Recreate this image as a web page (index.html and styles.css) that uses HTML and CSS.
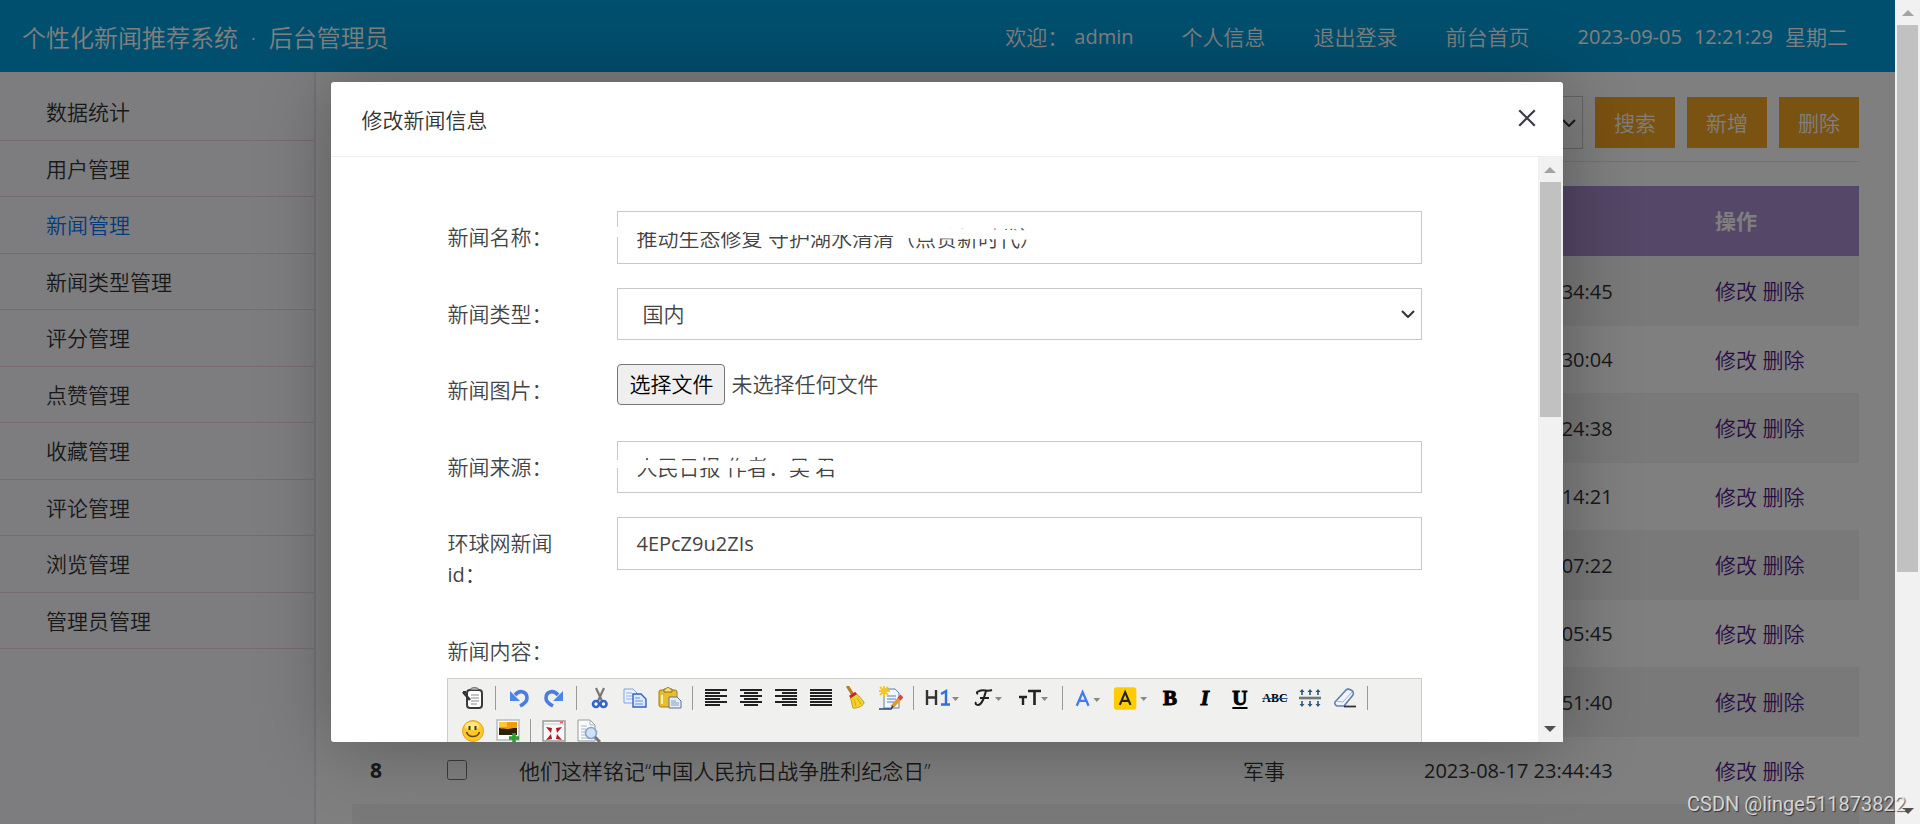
FILE: index.html
```html
<!DOCTYPE html>
<html lang="zh-CN">
<head>
<meta charset="utf-8">
<title>个性化新闻推荐系统 · 后台管理员</title>
<link rel="stylesheet" href="styles.css">
</head>
<body>
<div class="app">
  <header class="topbar">
    <h1 class="brand">个性化新闻推荐系统 &nbsp;·&nbsp; 后台管理员</h1>
    <nav class="topnav">
      <span class="welcome"><span>欢迎：</span><span class="latin">admin</span></span>
      <a href="#">个人信息</a>
      <a href="#">退出登录</a>
      <a href="#">前台首页</a>
      <span class="clock"><span class="latin">2023-09-05</span><span class="latin">12:21:29</span><span>星期二</span></span>
    </nav>
  </header>
  <div class="layout">
    <aside class="sidebar">
      <ul class="menu">
        <li><a href="#">数据统计</a></li>
        <li><a href="#">用户管理</a></li>
        <li><a href="#" class="active">新闻管理</a></li>
        <li><a href="#">新闻类型管理</a></li>
        <li><a href="#">评分管理</a></li>
        <li><a href="#">点赞管理</a></li>
        <li><a href="#">收藏管理</a></li>
        <li><a href="#">评论管理</a></li>
        <li><a href="#">浏览管理</a></li>
        <li><a href="#">管理员管理</a></li>
      </ul>
    </aside>
    <main class="content">
      <form class="search">
        <div class="select-wrap search-type">
          <select aria-label="新闻类型"><option></option></select>
          <svg class="chevron" viewBox="0 0 14 8"><path d="M1 1l6 6 6-6"/></svg>
        </div>
        <button type="button">搜索</button>
        <button type="button">新增</button>
        <button type="button">删除</button>
      </form>
      <table class="news">
        <colgroup><col class="c-id"><col class="c-check"><col><col class="c-type"><col class="c-time"><col class="c-op"></colgroup>
        <thead><tr><th></th><th></th><th></th><th></th><th></th><th>操作</th></tr></thead>
        <tbody>
          <tr><th>1</th><td><input type="checkbox" aria-label="选择 1"></td><td></td><td></td><td class="time">2023-08-18 00:34:45</td><td><a href="#">修改</a> <a href="#">删除</a></td></tr>
          <tr><th>2</th><td><input type="checkbox" aria-label="选择 2"></td><td></td><td></td><td class="time">2023-08-18 00:30:04</td><td><a href="#">修改</a> <a href="#">删除</a></td></tr>
          <tr><th>3</th><td><input type="checkbox" aria-label="选择 3"></td><td></td><td></td><td class="time">2023-08-18 00:24:38</td><td><a href="#">修改</a> <a href="#">删除</a></td></tr>
          <tr><th>4</th><td><input type="checkbox" aria-label="选择 4"></td><td></td><td></td><td class="time">2023-08-18 00:14:21</td><td><a href="#">修改</a> <a href="#">删除</a></td></tr>
          <tr><th>5</th><td><input type="checkbox" aria-label="选择 5"></td><td></td><td></td><td class="time">2023-08-18 00:07:22</td><td><a href="#">修改</a> <a href="#">删除</a></td></tr>
          <tr><th>6</th><td><input type="checkbox" aria-label="选择 6"></td><td></td><td></td><td class="time">2023-08-18 00:05:45</td><td><a href="#">修改</a> <a href="#">删除</a></td></tr>
          <tr><th>7</th><td><input type="checkbox" aria-label="选择 7"></td><td></td><td></td><td class="time">2023-08-17 23:51:40</td><td><a href="#">修改</a> <a href="#">删除</a></td></tr>
          <tr><th>8</th><td><input type="checkbox" aria-label="选择 8"></td><td>他们这样铭记“中国人民抗日战争胜利纪念日”</td><td>军事</td><td class="time">2023-08-17 23:44:43</td><td><a href="#">修改</a> <a href="#">删除</a></td></tr>
          <tr><th></th><td></td><td></td><td></td><td></td><td></td></tr>
        </tbody>
      </table>
    </main>
  </div>

  <div class="shade">
    <section class="dialog" role="dialog" aria-labelledby="dlg-title">
      <div class="dialog-head">
        <h2 id="dlg-title">修改新闻信息</h2>
        <button type="button" class="close" aria-label="关闭"><svg viewBox="0 0 18 18"><path d="M2 2l14 14M16 2L2 16"/></svg></button>
      </div>
      <div class="dialog-body">
        <form class="form">
          <div class="row">
            <label for="name">新闻名称：</label>
            <div class="field">
              <input id="name" type="text" value="推动生态修复 守护湖水清清（点赞新时代）">
              <svg class="mask" viewBox="0 0 440 53"><path d="M0 16L25 12L330 17L430 20V29L285 27L275 24H150V21H18V26H0z"/></svg>
            </div>
          </div>
          <div class="row">
            <label for="type">新闻类型：</label>
            <div class="field select-wrap">
              <select id="type"><option>国内</option></select>
              <svg class="chevron" viewBox="0 0 14 8"><path d="M1 1l6 6 6-6"/></svg>
            </div>
          </div>
          <div class="row">
            <label for="pic">新闻图片：</label>
            <label class="file"><input id="pic" type="file"><span class="file-btn">选择文件</span><span>未选择任何文件</span></label>
          </div>
          <div class="row">
            <label for="source">新闻来源：</label>
            <div class="field">
              <input id="source" type="text" value="人民日报 作者：吴 君">
              <svg class="mask" viewBox="0 0 440 53"><path d="M0 19L225 20V27H0z"/></svg>
            </div>
          </div>
          <div class="row tall">
            <label for="hid">环球网新闻<span class="latin">id</span>：</label>
            <div class="field"><input id="hid" type="text" value="4EPcZ9u2ZIs"></div>
          </div>
          <div class="editor-row">
            <span class="editor-label">新闻内容：</span>
            <div class="editor">
              <div class="tools">
                <button type="button" aria-label="源代码"><svg viewBox="0 0 24 24"><rect x="6" y="4" width="15" height="18" rx="3" fill="#fff" stroke="#3a3a3a" stroke-width="2"/><path d="M9 4c0-3 9-3 9 0z" fill="#ddd" stroke="#444"/><path d="M10 9h8M10 12h8M10 15h8M10 18h6" stroke="#888"/><path d="M2 6l7 8" stroke="#333" stroke-width="2.5"/><path d="M2 6l3 0" stroke="#333" stroke-width="2"/></svg></button>
                <i></i>
                <button type="button" aria-label="后退"><svg viewBox="0 0 24 24"><path d="M8 9c5-6 12-3 12 3 0 4-3 6-7 8" fill="none" stroke="#4a7de0" stroke-width="3.6"/><path d="M3 5v10h10z" fill="#4a86e8"/></svg></button>
                <button type="button" aria-label="前进"><svg viewBox="0 0 24 24"><path d="M16 9C11 3 4 6 4 12c0 4 3 6 7 8" fill="none" stroke="#4a7de0" stroke-width="3.6"/><path d="M21 5v10H11z" fill="#4a86e8"/></svg></button>
                <i></i>
                <button type="button" aria-label="剪切"><svg viewBox="0 0 24 24"><path d="M8 2l6 13M16 2l-6 13" stroke="#777" stroke-width="2.2"/><circle cx="8" cy="18" r="3" fill="#fff" stroke="#2f66c8" stroke-width="2.6"/><circle cx="15.500" cy="18" r="3" fill="#fff" stroke="#2f66c8" stroke-width="2.6"/></svg></button>
                <button type="button" aria-label="复制"><svg viewBox="0 0 24 24"><path d="M1 3h9l4 4v10H1z" fill="#eaf2ff" stroke="#7fa3e0"/><path d="M3 7h6M3 10h8M3 13h8" stroke="#8fb0e6"/><path d="M10 8h8l5 5v8H10z" fill="#dce8ff" stroke="#2f62c4" stroke-width="1.400"/><path d="M12 12h5M12 15h8M12 18h8" stroke="#6a93dc"/></svg></button>
                <button type="button" aria-label="粘贴"><svg viewBox="0 0 24 24"><rect x="1" y="4" width="18" height="17" rx="2" fill="#e9bd32" stroke="#a77b13"/><path d="M6 6V3h2c0-2 4-2 4 0h2v3z" fill="#fbe27b" stroke="#8c6a14"/><path d="M4 9v9" stroke="#fff3a8" stroke-width="2"/><path d="M11 11h8l4 4v7H11z" fill="#e4ecf7" stroke="#5d7594"/><path d="M13 15h5M13 17h8M13 19h8" stroke="#8b9fb8"/></svg></button>
                <i></i>
                <button type="button" aria-label="左对齐"><svg class="lines" viewBox="0 0 24 24"><path d="M1 4h22M1 7h15M1 10h22M1 13h15M1 16h22M1 19h15"/></svg></button>
                <button type="button" aria-label="居中"><svg class="lines" viewBox="0 0 24 24"><path d="M1 4h22M5 7h14M1 10h22M5 13h14M1 16h22M5 19h14"/></svg></button>
                <button type="button" aria-label="右对齐"><svg class="lines" viewBox="0 0 24 24"><path d="M1 4h22M8 7h15M1 10h22M8 13h15M1 16h22M8 19h15"/></svg></button>
                <button type="button" aria-label="两端对齐"><svg class="lines" viewBox="0 0 24 24"><path d="M1 4h22M1 7h22M1 10h22M1 13h22M1 16h22M1 19h22"/></svg></button>
                <button type="button" aria-label="清理HTML代码"><svg viewBox="0 0 24 24"><path d="M4 1l5 8" stroke="#bd7b1c" stroke-width="3.200" stroke-linecap="round"/><path d="M6 10l6-3 8 9c1 3-7 7-11 6z" fill="#f3d22e" stroke="#c99a13"/><path d="M6 11l6-4" stroke="#c8282a" stroke-width="3"/><path d="M10 13l2 7M13 12l4 6" stroke="#d0a416"/></svg></button>
                <button type="button" aria-label="一键排版"><svg viewBox="0 0 24 24"><path d="M5 3h11l4 4v15H5z" fill="#f3f7ff" stroke="#5e7fb5"/><path d="M8 10h9M8 13h9M8 16h7" stroke="#8aa8d8" stroke-width="1.300"/><path d="M5 0v11M0 5h11M1 1l8 8M9 1L1 9" stroke="#f5c624" stroke-width="1.800"/><path d="M13 21l9-10" stroke="#e09a2a" stroke-width="4"/><path d="M20 13l3-3" stroke="#d8453a" stroke-width="4"/><path d="M0 23h8l4 0 2-3" stroke="#26476e" stroke-width="1.600" fill="none"/></svg></button>
                <i></i>
                <button type="button" class="wide" aria-label="段落"><svg viewBox="0 0 46 24"><path d="M8 4v15M17 4v15M8 11.500h9" stroke="#333" stroke-width="2.400"/><path d="M22 8l5-3v14M22 18.500h9" fill="none" stroke="#2f6fe4" stroke-width="2.400"/><path class="tri" d="M33 11h7l-3.500 4z"/></svg></button>
                <button type="button" class="wide" aria-label="字体"><svg viewBox="0 0 46 24"><path d="M14 5c5-2 8 1 13-1M21 5c-2 7-4 14-8 14-2 0-3-1-2-3M15 12h9M13 8c-2-1-1-3 2-3" fill="none" stroke="#222" stroke-width="2"/><path class="tri" d="M30 11h7l-3.500 4z"/></svg></button>
                <button type="button" class="wide" aria-label="文字大小"><svg viewBox="0 0 46 24"><path d="M8 11h8M12 11v8" stroke="#222" stroke-width="2.400"/><path d="M17 5h13M23.500 5v14" stroke="#222" stroke-width="2.600"/><path class="tri" d="M30 11h7l-3.500 4z"/></svg></button>
                <i></i>
                <button type="button" class="mid" aria-label="文字颜色"><svg viewBox="0 0 43 24"><path d="M9 20l6-14 6 14M11 15h8" fill="none" stroke="#3f7cf0" stroke-width="2.400"/><path class="tri" d="M26 12h7l-3.500 4z"/></svg></button>
                <button type="button" class="mid" aria-label="文字背景"><svg viewBox="0 0 43 24"><rect x="4" y="1" width="23" height="23" rx="3" fill="#fc0"/><path d="M10 19l5.500-13L21 19M12 15h7" fill="none" stroke="#222" stroke-width="2.200"/><path class="tri" d="M31 11h7l-3.500 4z"/></svg></button>
                <button type="button" aria-label="粗体"><b class="glyph">B</b></button>
                <button type="button" aria-label="斜体"><b class="glyph slant">I</b></button>
                <button type="button" aria-label="下划线"><b class="glyph under">U</b></button>
                <button type="button" aria-label="删除线"><b class="glyph strike">ABC</b></button>
                <button type="button" aria-label="行距"><svg viewBox="0 0 24 24"><path d="M1 12h22" stroke="#777" stroke-width="2.600"/><path d="M4 9V4M12 9V4M20 9V4M4 15v5M12 15v5M20 15v5" stroke="#2e5878" stroke-width="1.600"/><path d="M1.500 6L4 3l2.500 3zM9.500 6L12 3l2.500 3zM17.500 6L20 3l2.500 3zM1.500 18L4 21l2.500-3zM9.500 18l2.500 3 2.500-3zM17.500 18l2.500 3 2.500-3z" fill="#2e5878"/></svg></button>
                <button type="button" aria-label="删除格式"><svg viewBox="0 0 24 24"><path d="M2 16L13 4c1-1 3-1 5 0s3 3 2 5L11 20H5c-2 0-4-2-3-4z" fill="#eef4fc" stroke="#5f7fae" stroke-width="1.600"/><path d="M3 15l7 1 9-10" fill="none" stroke="#9bb5d8"/><path d="M11 20.500h12" stroke="#333" stroke-width="1.800"/></svg></button>
                <i></i>
              </div>
              <div class="tools">
                <button type="button" aria-label="插入表情"><svg viewBox="0 0 24 24"><circle cx="12" cy="12" r="10.500" fill="#ffc928" stroke="#e8a317"/><ellipse cx="11" cy="7" rx="7" ry="4" fill="#ffe88a"/><path d="M8.500 7v4M14.500 7v4" stroke="#4a3208" stroke-width="2"/><path d="M5.500 13c2 6 11 6 13 0" fill="none" stroke="#6b4708" stroke-width="1.600"/></svg></button>
                <button type="button" aria-label="图片"><svg viewBox="0 0 24 24"><path d="M1 1h22v20H1z" fill="#fff" stroke="#bbb" stroke-width="1.500"/><path d="M3 3h18v13H3z" fill="#2c2208"/><path d="M3 3h18v6c-6 0-8 2-18 0z" fill="#f39a14"/><path d="M3 3h8v5H3z" fill="#ffc933"/><path d="M18 14v10M13 19h10" stroke="#2f9e2f" stroke-width="3.500"/></svg></button>
                <i></i>
                <button type="button" aria-label="全屏显示"><svg viewBox="0 0 24 24"><path d="M1 2h22v20H1z" fill="#f7f7f7" stroke="#999" stroke-width="1.500"/><path d="M2 5h20" stroke="#ccc"/><path d="M18 3.500h3" stroke="#d55" stroke-width="1.500"/><path d="M4 8l6 1-1 5zM20 8l-6 1 1 5zM4 21l6-1-1-5zM20 21l-6-1 1-5z" fill="#b01c24"/></svg></button>
                <button type="button" aria-label="预览"><svg viewBox="0 0 24 24"><path d="M1 1h12l5 5v16H1z" fill="#fafafa" stroke="#999"/><path d="M13 1v5h5M4 7h6M4 10h5M4 13h5M4 16h5M4 19h8" fill="none" stroke="#aab6c4"/><circle cx="14" cy="14" r="5.500" fill="#cfe0f8" stroke="#86a4d4" stroke-width="1.600"/><path d="M18 18l5 5" stroke="#777" stroke-width="3"/></svg></button>
              </div>
            </div>
          </div>
        </form>
        <div class="scroll inner" aria-hidden="true"><span class="up"></span><span class="thumb"></span><span class="down"></span></div>
      </div>
    </section>
  </div>
</div>
<div class="scroll outer" aria-hidden="true"><span class="up"></span><span class="thumb"></span><span class="down"></span></div>
<div class="watermark">CSDN @linge511873822</div>
</body>
</html>
```
FILE: styles.css
```css
* { box-sizing: border-box; }
body {
  margin: 0;
  height: 100vh;
  overflow: hidden;
  display: flex;
  font-family: "Open Sans", "Noto Sans CJK SC", sans-serif;
  font-size: 21px;
  font-weight: 350;
  color: #333;
}
button, input, select { font: inherit; color: inherit; }
h1, h2, ul { margin: 0; padding: 0; font-weight: inherit; }
a { text-decoration: none; color: inherit; }
.latin { font-size: 20px; font-weight: 400; }

.app { position: relative; flex: 1; min-width: 0; overflow: hidden; display: flex; flex-direction: column; background: #fff; }
.topbar { flex: none; height: 72px; padding: 0 47px 0 22px; display: flex; align-items: center; justify-content: space-between; background: #009fdc; color: #fff; }
.brand { font-size: 24px; }
.topnav { display: flex; align-items: center; gap: 48px; }
.welcome { display: flex; align-items: center; gap: 6px; }
.clock { display: flex; align-items: center; gap: 12px; }

.layout { flex: 1; min-height: 0; display: flex; }
.sidebar { flex: none; width: 316px; padding-top: 12px; background: #fafafe; border-right: 2px solid #e6e6e6; }
.menu { list-style: none; display: grid; grid-template-rows: repeat(5, 57px 56px); }
.menu li { border-bottom: 1px solid #f0d8d8; }
.menu a { display: flex; align-items: center; height: 100%; padding: 0 0 2px 46px; color: #333; }
.menu a.active { color: #0078ff; }

.content { flex: 1; min-width: 0; padding: 24px 36px 0; }
.search { display: flex; align-items: center; justify-content: flex-end; gap: 12px; padding-bottom: 12px; border-bottom: 1px solid #e6e6e6; margin-bottom: 24px; }
.search button { width: 80px; height: 51px; padding: 0 0 2px; border: 0; background: #f5a422; color: #fff; }
.search-type { width: 240px; height: 53px; }

.news { width: 100%; table-layout: fixed; border-collapse: collapse; }
.c-id { width: 77px; }
.c-check { width: 72px; }
.c-type { width: 181px; }
.c-time { width: 291px; }
.c-op { width: 162px; }
.news th, .news td { padding: 0 0 2px 18px; text-align: left; white-space: nowrap; height: 67px; }
.news th { font-weight: 700; }
.news thead th { height: 70px; background: #a88fcf; color: #fff; }
.news tbody tr:nth-child(odd) > * { height: 70px; background: #f2f2f2; }
.news td.time { font-size: 20px; font-weight: 400; padding-bottom: 0; }
.news a { color: #551a8b; }
.news input { display: block; width: 20px; height: 20px; margin: 0; }

.select-wrap { position: relative; }
.select-wrap select { width: 100%; height: 100%; padding: 0 24px; border: 1px solid #c8c8cc; border-radius: 0; background: #fff; appearance: none; }
.chevron { position: absolute; right: 7px; top: 50%; width: 14px; height: 8px; margin-top: -4px; fill: none; stroke: #333; stroke-width: 2; pointer-events: none; }

.shade { position: absolute; inset: 0; padding-right: 1px; display: flex; align-items: center; justify-content: center; background: rgba(0, 0, 0, .5); }
.dialog { width: 65%; height: 80vh; display: flex; flex-direction: column; background: #fff; border-radius: 3px; box-shadow: 2px 2px 75px rgba(0, 0, 0, .3); }
.dialog-head { flex: none; height: 75px; padding: 0 26px 0 30px; display: flex; align-items: center; justify-content: space-between; border-bottom: 1px solid #eee; }
.dialog-head h2 { font-size: 21px; }
.close { padding: 0 0 2px; border: 0; background: none; display: flex; }
.close svg { width: 20px; height: 20px; fill: none; stroke: #3c3c46; stroke-width: 2; }
.dialog-body { flex: 1; min-height: 0; overflow: hidden; display: flex; }

.form { flex: 1; min-width: 0; padding: 54px 116px 0; color: #444; }
.row { display: flex; height: 53px; margin-bottom: 24px; }
.row:nth-child(even) { height: 52px; }
.row.tall { height: auto; }
.row > label:first-child { flex: none; width: 120px; margin-right: 50px; padding: 11px 0; line-height: 31px; }
.field { position: relative; flex: 1; }
.field input { width: 100%; height: 53px; padding: 0 18px 2px; border: 1px solid #c8c8cc; border-radius: 0; background: #fff; }
.row:nth-child(even) input { height: 52px; }
.field select { padding: 0 24px; }
#hid { font-size: 20px; font-weight: 400; padding-bottom: 0; }
.mask { position: absolute; left: 0; top: 0; width: 440px; height: 53px; fill: #fff; pointer-events: none; }
.file { display: flex; align-items: center; gap: 6px; height: 41px; line-height: 39px; }
.file input { position: absolute; width: 1px; height: 1px; opacity: 0; }
.file-btn { height: 41px; padding: 0 11px; border: 1px solid #767676; border-radius: 4px; background: #efefef; color: #000; }
.editor-label { display: block; padding: 11px 0; line-height: 31px; }
.editor { height: 400px; padding: 2px 7px; border: 1px solid #ccc; background: #f0f0ee; }
.tools { display: flex; height: 33px; align-items: center; }
.tools button { flex: none; width: 35px; height: 33px; padding: 0; border: 0; background: none; display: flex; align-items: center; justify-content: center; }
.tools button.wide { width: 46px; }
.tools button.mid { width: 42px; }
.tools i { flex: none; width: 1px; height: 24px; margin: 0 5px; background: #999; }
.tools svg { width: 24px; height: 24px; fill: none; }
.tools .wide svg { width: 46px; }
.tools .mid svg { width: 43px; }
.lines { stroke: #222; stroke-width: 2; }
.tri { fill: #888; }
.glyph { font: 700 21px/22px "Liberation Serif", serif; color: #000; -webkit-text-stroke: 1px #000; }
.slant { font-style: italic; }
.under { text-decoration: underline; }
.strike { font-size: 12px; -webkit-text-stroke: 0; text-decoration: line-through #2c5490; }

.scroll { flex: none; width: 25px; padding: 10px 2px; display: flex; flex-direction: column; align-items: center; background: #f1f1f1; }
.up, .down { width: 0; height: 0; border: 6px solid transparent; border-top-width: 0; border-bottom: 6px solid #a3a3a3; }
.down { margin-top: auto; border-width: 6px 6px 0; border-color: #505050 transparent transparent; }
.thumb { width: 100%; margin-top: 9px; background: #c1c1c1; }
.inner .thumb { flex: none; height: 235px; }
.outer .thumb { height: 68%; }
.watermark { position: absolute; right: 14px; bottom: 8px; font-family: Roboto, sans-serif; font-size: 20px; line-height: 24px; font-weight: 400; color: rgba(255, 255, 255, .75); text-shadow: 1px 1px 1px rgba(0, 0, 0, .6); }
```
